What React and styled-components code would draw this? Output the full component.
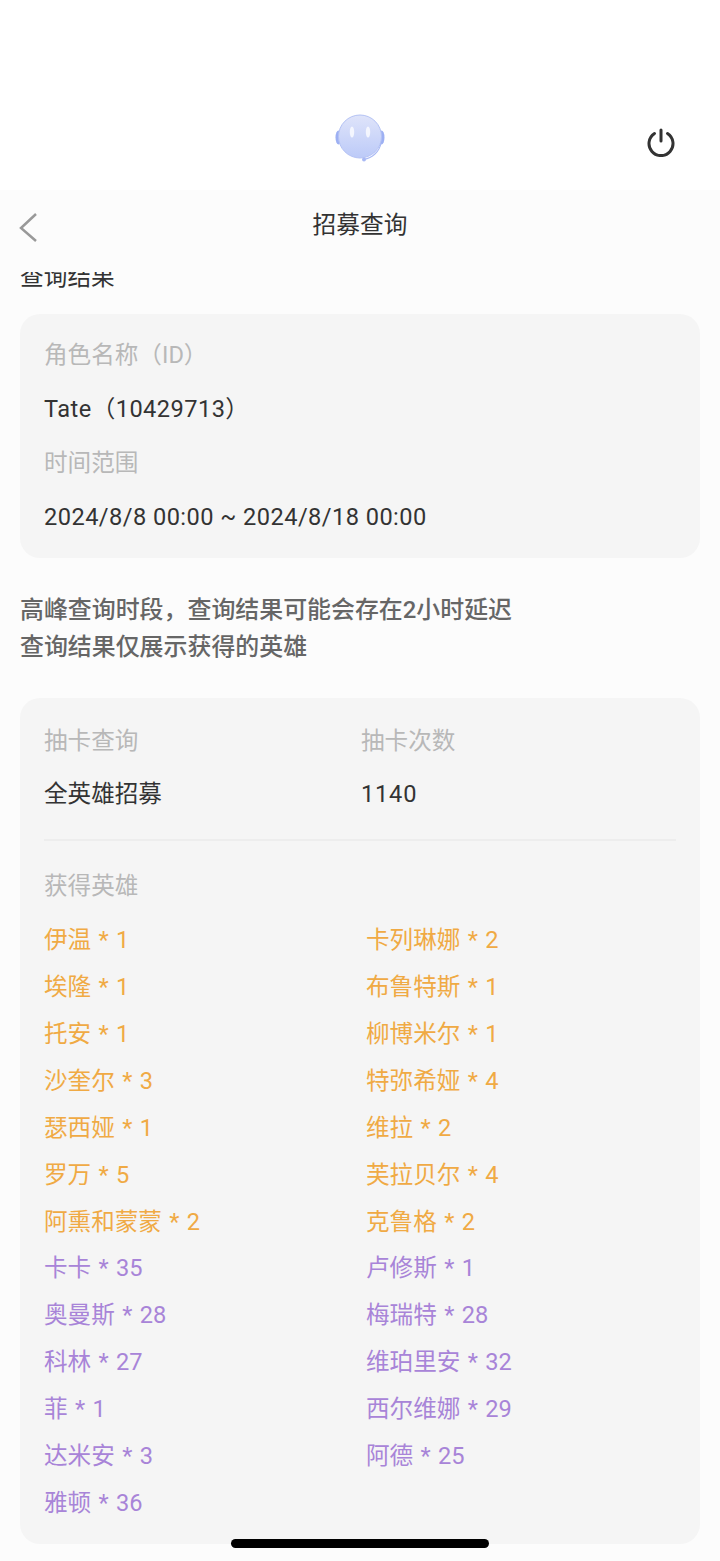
import React from 'react';
import styled, { createGlobalStyle } from 'styled-components';

const GlobalStyle = createGlobalStyle`
  html, body {
    margin: 0;
    padding: 0;
    background: #fcfcfc;
  }
  body {
    font-family: "Roboto", "Noto Sans CJK SC", sans-serif;
  }
`;

const Page = styled.div`
  position: relative;
  width: 720px;
  height: 1561px;
  overflow: hidden;
  background: #fcfcfc;
  display: flex;
  flex-direction: column;
`;

const TopBar = styled.div`
  height: 190px;
  flex: none;
  background: #fff;
  display: flex;
  align-items: flex-end;
  justify-content: center;
  position: relative;
`;

const Avatar = styled.svg`
  width: 50px;
  height: 50px;
  margin-bottom: 27px;
`;

const PowerButton = styled.svg`
  position: absolute;
  right: 44px;
  top: 127px;
  width: 30px;
  height: 30px;
`;

const NavBar = styled.div`
  height: 82px;
  flex: none;
  position: relative;
  display: flex;
  align-items: flex-start;
  justify-content: center;
`;

const NavTitle = styled.div`
  font-size: 23.7px;
  line-height: 34px;
  margin-top: 18px;
  color: #333;
`;

const BackIcon = styled.svg`
  position: absolute;
  left: 18px;
  top: 21px;
  width: 22px;
  height: 32px;
`;

const Scroller = styled.div`
  flex: 1;
  overflow: hidden;
  padding: 0 20px;
`;

const Content = styled.div`
  margin-top: -12px;
  display: flex;
  flex-direction: column;
`;

const SectionTitle = styled.div`
  font-size: 23.7px;
  line-height: 34px;
  color: #333;
  margin-bottom: 20px;
`;

const Card = styled.div`
  background: #f5f5f5;
  border-radius: 20px;
  padding: ${p => p.$top || 18}px 24px ${p => p.$bottom || 18}px;
`;

const Label = styled.div`
  font-size: 23.6px;
  line-height: 46px;
  height: 46px;
  color: #b8b8b8;
  margin-bottom: ${p => p.$gap ?? 8}px;
`;

const Value = styled.div`
  font-size: 23.6px;
  line-height: 46px;
  height: 46px;
  color: #333;
  letter-spacing: ${p => p.$spacing || 0}px;
  margin-bottom: ${p => p.$gap ?? 8}px;
`;

const Notice = styled.div`
  margin: 34px 0 32px;
  font-size: 23.93px;
  line-height: 37px;
  font-weight: 500;
  color: #666;
`;

const SummaryGrid = styled.div`
  display: grid;
  grid-template-columns: 317px 1fr;
  row-gap: 7px;
  padding-bottom: 22px;
  border-bottom: 2px solid #ededed;
  margin-bottom: 22px;
`;

const HeroGrid = styled.div`
  display: grid;
  grid-template-columns: 322px 1fr;
  grid-auto-rows: 46.93px;
`;

const Hero = styled.div`
  font-size: 23.6px;
  line-height: 47px;
  white-space: nowrap;
  word-spacing: 1.5px;
  color: ${p => (p.$rank === 'gold' ? '#f0aa44' : '#a884d8')};
`;

const HomeIndicator = styled.div`
  position: absolute;
  left: 231px;
  top: 1539px;
  width: 258px;
  height: 9px;
  border-radius: 5px;
  background: #000;
`;

const heroes = [
  ['伊温 * 1', 'gold'], ['卡列琳娜 * 2', 'gold'],
  ['埃隆 * 1', 'gold'], ['布鲁特斯 * 1', 'gold'],
  ['托安 * 1', 'gold'], ['柳博米尔 * 1', 'gold'],
  ['沙奎尔 * 3', 'gold'], ['特弥希娅 * 4', 'gold'],
  ['瑟西娅 * 1', 'gold'], ['维拉 * 2', 'gold'],
  ['罗万 * 5', 'gold'], ['芙拉贝尔 * 4', 'gold'],
  ['阿熏和蒙蒙 * 2', 'gold'], ['克鲁格 * 2', 'gold'],
  ['卡卡 * 35', 'purple'], ['卢修斯 * 1', 'purple'],
  ['奥曼斯 * 28', 'purple'], ['梅瑞特 * 28', 'purple'],
  ['科林 * 27', 'purple'], ['维珀里安 * 32', 'purple'],
  ['菲 * 1', 'purple'], ['西尔维娜 * 29', 'purple'],
  ['达米安 * 3', 'purple'], ['阿德 * 25', 'purple'],
  ['雅顿 * 36', 'purple'],
];

const App = () => (
  <Page>
    <GlobalStyle />
    <TopBar>
      <Avatar viewBox="0 0 50 50">
        <defs>
          <linearGradient id="face" x1="0" y1="0" x2="0" y2="1">
            <stop offset="0" stopColor="#dfe4fa" />
            <stop offset="1" stopColor="#bccaf8" />
          </linearGradient>
        </defs>
        <ellipse cx="3.5" cy="24.5" rx="3" ry="7" fill="#9db0f3" />
        <ellipse cx="46.5" cy="24.5" rx="3" ry="7" fill="#9db0f3" />
        <circle cx="25" cy="23.5" r="21.5" fill="url(#face)" stroke="#b4c2f4" strokeWidth="1" />
        <path d="M46 30c-1.5 9-9 15-17 16.5" fill="none" stroke="#a9b9f4" strokeWidth="1.2" />
        <circle cx="29" cy="46.5" r="2" fill="#a9b9f4" />
        <ellipse cx="17" cy="19" rx="2.2" ry="5.5" fill="#f4f6fe" />
        <ellipse cx="33" cy="19" rx="2.2" ry="5.5" fill="#f4f6fe" />
      </Avatar>
      <PowerButton viewBox="0 0 30 30" fill="none" stroke="#333" strokeWidth="3" strokeLinecap="round">
        <path d="M15 3v11" />
        <path d="M8.5 6.5a12 12 0 1 0 13 0" />
      </PowerButton>
    </TopBar>
    <NavBar>
      <BackIcon viewBox="0 0 22 32" fill="none" stroke="#999" strokeWidth="2.5">
        <path d="M18 3L3 17l15 13" />
      </BackIcon>
      <NavTitle>招募查询</NavTitle>
    </NavBar>
    <Scroller>
      <Content>
        <SectionTitle>查询结果</SectionTitle>
        <Card>
          <Label>角色名称（ID）</Label>
          <Value $spacing={0.45}>Tate（10429713）</Value>
          <Label>时间范围</Label>
          <Value $gap={0} $spacing={0.45}>2024/8/8 00:00 ~ 2024/8/18 00:00</Value>
        </Card>
        <Notice>
          高峰查询时段，查询结果可能会存在2小时延迟
          <br />
          查询结果仅展示获得的英雄
        </Notice>
        <Card $top={20} $bottom={17}>
          <SummaryGrid>
            <Label $gap={0}>抽卡查询</Label>
            <Label $gap={0}>抽卡次数</Label>
            <Value $gap={0}>全英雄招募</Value>
            <Value $gap={0} $spacing={0.8}>1140</Value>
          </SummaryGrid>
          <Label>获得英雄</Label>
          <HeroGrid>
            {heroes.map(([name, rank]) => (
              <Hero key={name} $rank={rank}>{name}</Hero>
            ))}
          </HeroGrid>
        </Card>
      </Content>
    </Scroller>
    <HomeIndicator />
  </Page>
);

export default App;
